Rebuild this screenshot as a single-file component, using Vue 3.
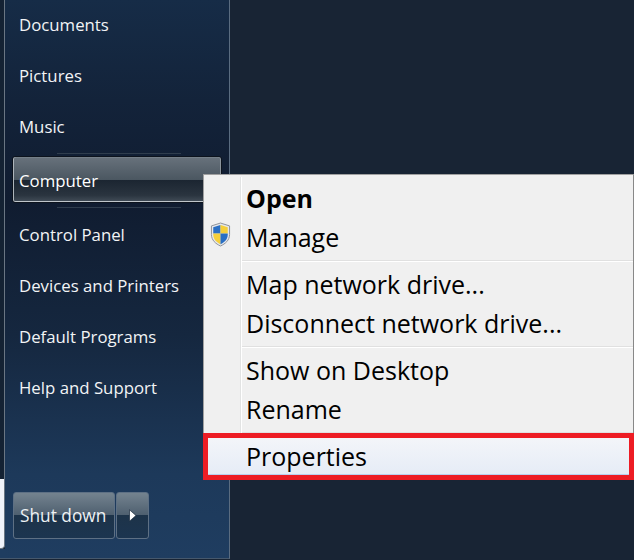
<script setup>
const links = [
  { label: 'Documents' },
  { label: 'Pictures' },
  { label: 'Music' },
  { label: 'Computer', active: true },
  { label: 'Control Panel' },
  { label: 'Devices and Printers' },
  { label: 'Default Programs' },
  { label: 'Help and Support' }
]
const groups = [
  [{ label: 'Open', bold: true }, { label: 'Manage', shield: true }],
  [{ label: 'Map network drive...' }, { label: 'Disconnect network drive...' }],
  [{ label: 'Show on Desktop' }, { label: 'Rename' }]
]
</script>

<template>
  <div class="desktop">
    <aside class="start">
      <div class="strip">
        <div class="strip-dark"></div>
        <div class="strip-light"></div>
        <div class="strip-foot"></div>
      </div>
      <div class="panel">
        <nav class="links">
          <template v-for="link in links" :key="link.label">
            <div class="sep sep-top" v-if="link.active"></div>
            <a class="link" :class="{ active: link.active }">{{ link.label }}</a>
            <div class="sep sep-bottom" v-if="link.active"></div>
          </template>
        </nav>
        <div class="power">
          <button class="btn shut">Shut down</button>
          <button class="btn more">
            <svg width="9" height="13" viewBox="0 0 9 13"><path d="M1.5 0.8 L8 6.5 L1.5 12.2 Z" fill="#fff" stroke="#16263a" stroke-width="0.7"/></svg>
          </button>
        </div>
      </div>
    </aside>

    <div class="menu">
      <div class="rail"></div>
      <template v-for="(group, i) in groups" :key="i">
        <div class="group">
          <div class="item" v-for="item in group" :key="item.label" :class="{ bold: item.bold }">
            <svg v-if="item.shield" class="shield" width="21" height="25" viewBox="0 0 22 26">
              <defs>
                <clipPath id="sh"><path d="M11 3 L18.6 5.4 V13 C18.6 18 15.2 21.3 11 23.2 C6.8 21.3 3.4 18 3.4 13 V5.4 Z"/></clipPath>
              </defs>
              <path d="M11 1 L20.5 4 V13 C20.5 19 16 22.8 11 25 C6 22.8 1.5 19 1.5 13 V4 Z" fill="#e6e8ec" stroke="#8a8f96" stroke-width="1"/>
              <g clip-path="url(#sh)">
                <rect x="0" y="0" width="11" height="12" fill="#2a6fc4"/>
                <rect x="11" y="0" width="11" height="12" fill="#f5cf3a"/>
                <rect x="0" y="12" width="11" height="14" fill="#f5cf3a"/>
                <rect x="11" y="12" width="11" height="14" fill="#2a6fc4"/>
              </g>
            </svg>
            <span>{{ item.label }}</span>
          </div>
        </div>
        <div class="divider"></div>
      </template>
      <div class="item hover"><span>Properties</span></div>
      <div class="highlight"></div>
    </div>
  </div>
</template>

<style>
html, body { margin: 0; padding: 0; background: #182434; }
</style>

<style scoped>
.desktop {
  position: relative;
  width: 634px;
  height: 560px;
  overflow: hidden;
  background: #182434;
  font-family: "Open Sans", "Noto Sans", "Liberation Sans", sans-serif;
  display: flex;
}
.start { display: flex; width: 230px; height: 559px; }
.strip { width: 5px; display: flex; flex-direction: column; }
.strip-dark { flex: 1; background: #142233; border-right: 1px solid #6a7683; }
.strip-light {
  height: 70px;
  background: #f0f3fa;
  border-right: 1px solid #6a7683;
  border-bottom: 1px solid #6a7683;
  border-bottom-right-radius: 4px;
  box-sizing: border-box;
}
.strip-foot { height: 9px; background: #1f3d60; border-bottom: 1px solid #46586c; }
.panel {
  width: 225px;
  display: flex;
  flex-direction: column;
  border-right: 1px solid #5a6c80;
  border-bottom: 1px solid #46586c;
  box-sizing: border-box;
  background: linear-gradient(180deg, #162c47 0%, #13233a 18%, #101c30 36%, #15273f 60%, #1d395a 85%, #1f3d60 100%);
}
.links { display: flex; flex-direction: column; margin-left: 7px; }
.link {
  height: 51px;
  line-height: 50px;
  padding-left: 7px;
  color: #f2f4f6;
  font-size: 16.8px;
  display: block;
  box-sizing: border-box;
}
.sep { height: 1px; width: 124px; margin-left: 45px; background: #2f3d4d; }
.sep-top { margin-bottom: 2px; }
.sep-bottom { margin-top: 4px; margin-bottom: 2px; }
.link.active {
  height: 47px;
  line-height: 48px;
  width: 210px;
  padding-left: 6px;
  color: #fff;
  border: 1px solid #0c131d;
  border-radius: 3px;
  background: linear-gradient(180deg, #68727c 0%, #4b5761 50%, #1b2531 51%, #2a343f 85%, #434e59 100%);
  box-shadow: inset 1px 0 #aeb5bb, inset -1px 0 #8b949c, inset 0 -1px #c0c6cb, inset 0 1px #757f88;
}
.power { margin: auto 0 19px 8px; display: flex; gap: 1px; }
.btn {
  height: 47px;
  margin: 0;
  padding: 0;
  border: 1px solid #5e7084;
  border-radius: 3px;
  color: #eef1f4;
  font: 17.3px "Open Sans", "Noto Sans", sans-serif;
  background: linear-gradient(180deg, #74838f 0%, #4f6070 48%, #1d3349 50%, #1c3550 100%);
  display: flex;
  align-items: center;
}
.shut { width: 102px; padding-left: 6px; }
.more { width: 33px; justify-content: center; }
.menu {
  position: absolute;
  left: 203px;
  top: 174px;
  width: 431px;
  height: 305px;
  box-sizing: border-box;
  border: 1px solid #a0a0a0;
  border-right-color: #888;
  background: #f0f0f0;
  color: #000;
  padding-top: 5px;
  font-size: 25px;
}
.rail { position: absolute; left: 36px; top: 2px; bottom: 2px; width: 2px; background: #e2e3e3; border-right: 1px solid #fff; box-sizing: border-box; }
.group { display: flex; flex-direction: column; }
.item {
  position: relative;
  height: 39px;
  line-height: 37px;
  padding-left: 42px;
  white-space: nowrap;
}
.item.bold { font-weight: 700; }
.shield { position: absolute; left: 6px; top: 3px; }
.divider { height: 2px; margin: 2px 0 4px 38px; background: #e0e0e0; border-bottom: 1px solid #fff; box-sizing: border-box; }
.hover {
  height: 37px;
  padding-left: 42px;
  background: linear-gradient(180deg, #f3f5f9 0%, #e6ecf6 100%);
  border-bottom: 1px solid #b8d0ef;
  box-sizing: border-box;
}
.highlight {
  position: absolute;
  left: -1px;
  top: 258px;
  right: -1px;
  bottom: -2px;
  border: 5px solid #ed1c24;
  box-sizing: border-box;
  pointer-events: none;
}
</style>
